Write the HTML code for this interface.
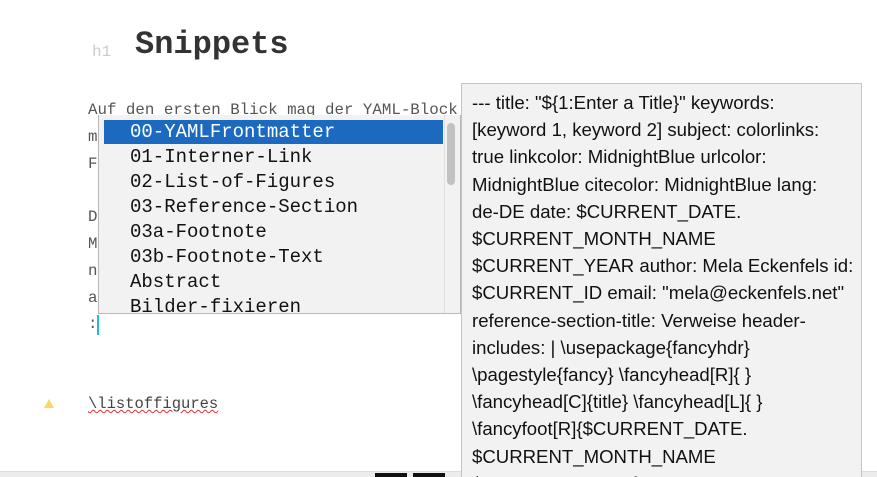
<!DOCTYPE html>
<html style="overflow:hidden;height:477px"><head><style>
body{margin:0;width:877px;height:477px;background:#fff;position:relative;overflow:hidden;font-family:"Liberation Mono",monospace}
.a{position:absolute}
.bg{font-size:15.8px;color:#555;left:88px;white-space:pre}
.dd{left:98px;top:115px;width:361px;height:198px;background:#f2f2f2;border:1px solid #b8b8b8;border-top:none;overflow:hidden}
.it{position:absolute;left:31px;font-size:19px;color:#111;white-space:pre}
.tt{left:461px;top:83px;width:401px;height:394px;overflow:hidden;background:#f2f2f2;border:1px solid #c4c4c4;border-bottom:none;font-family:"Liberation Sans",sans-serif;font-size:18.6px;line-height:27.2px;color:#111;padding:5px 0 0 10px;box-sizing:border-box;white-space:nowrap}
</style></head><body>
<div class="a" style="left:92px;top:43px;font-size:16px;color:#ccc">h1</div>
<div class="a" style="left:135px;top:26px;font-size:32px;font-weight:bold;color:#333">Snippets</div>
<div class="a bg" style="top:101px">Auf den ersten Blick mag der YAML-Block</div>
<div class="a bg" style="top:128px">m</div>
<div class="a bg" style="top:155px">F</div>
<div class="a bg" style="top:208px">D</div>
<div class="a bg" style="top:235px">M</div>
<div class="a bg" style="top:262px">n</div>
<div class="a bg" style="top:289px">a</div>
<div class="a bg" style="top:315px">:</div>
<div class="a" style="left:97px;top:315px;width:2px;height:20px;background:#22b8d8"></div>
<div class="a dd">
<div class="a" style="left:5px;top:5px;width:339px;height:24px;background:#1b6ac0"></div>
<div class="it" style="top:6px;color:#fff">00-YAMLFrontmatter</div>
<div class="it" style="top:31px">01-Interner-Link</div>
<div class="it" style="top:56px">02-List-of-Figures</div>
<div class="it" style="top:81px">03-Reference-Section</div>
<div class="it" style="top:106px">03a-Footnote</div>
<div class="it" style="top:131px">03b-Footnote-Text</div>
<div class="it" style="top:156px">Abstract</div>
<div class="it" style="top:181px">Bilder-fixieren</div>
<div class="a" style="left:345px;top:0;width:1px;height:198px;background:#e0e0e0"></div>
<div class="a" style="left:348px;top:8px;width:8px;height:62px;border-radius:4px;background:#c2c2c2"></div>
</div>
<div class="a" style="left:44px;top:399px;width:0;height:0;border-left:5px solid transparent;border-right:5px solid transparent;border-bottom:9px solid #f8d86a"></div>
<div class="a" style="left:88px;top:395px;font-size:15.5px;color:#444;text-decoration:underline wavy #e03030;text-decoration-thickness:1px">\listoffigures</div>
<div class="a" style="left:0;top:471px;width:877px;height:6px;background:#ececec;border-top:1px solid #ddd"></div>
<div class="a" style="left:375px;top:473px;width:32px;height:4px;background:#111"></div>
<div class="a" style="left:413px;top:473px;width:32px;height:4px;background:#111"></div>
<div class="a tt">--- title: "${1:Enter a Title}" keywords:<br>[keyword 1, keyword 2] subject: colorlinks:<br>true linkcolor: MidnightBlue urlcolor:<br>MidnightBlue citecolor: MidnightBlue lang:<br>de-DE date: $CURRENT_DATE.<br>$CURRENT_MONTH_NAME<br>$CURRENT_YEAR author: Mela Eckenfels id:<br>$CURRENT_ID email: "mela@eckenfels.net"<br>reference-section-title: Verweise header-<br>includes: | \usepackage{fancyhdr}<br>\pagestyle{fancy} \fancyhead[R]{ }<br>\fancyhead[C]{title} \fancyhead[L]{ }<br>\fancyfoot[R]{$CURRENT_DATE.<br>$CURRENT_MONTH_NAME<br>$CURRENT_YEAR}</div>
</body></html>
